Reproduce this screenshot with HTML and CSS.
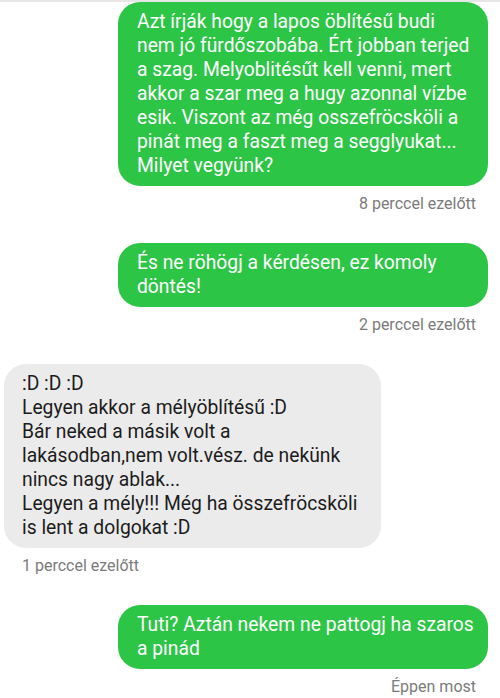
FILE: index.html
```html
<!DOCTYPE html>
<html lang="hu">
<head>
<meta charset="utf-8">
<link rel="stylesheet" href="styles.css">
</head>
<body>
<div class="topband"></div>
<div class="chat">
  <div class="msg out">
    <div class="bubble">Azt írják hogy a lapos öblítésű budi<br>nem jó fürdőszobába. Ért jobban terjed<br>a szag. Melyoblitésűt kell venni, mert<br>akkor a szar meg a hugy azonnal vízbe<br>esik. Viszont az még osszefröcsköli a<br>pinát meg a faszt meg a segglyukat...<br>Milyet vegyünk?</div>
    <div class="time">8 perccel ezelőtt</div>
  </div>
  <div class="msg out">
    <div class="bubble">És ne röhögj a kérdésen, ez komoly<br>döntés!</div>
    <div class="time">2 perccel ezelőtt</div>
  </div>
  <div class="msg in">
    <div class="bubble">:D :D :D<br>Legyen akkor a mélyöblítésű :D<br>Bár neked a másik volt a<br>lakásodban,nem volt.vész. de nekünk<br>nincs nagy ablak...<br>Legyen a mély!!! Még ha összefröcsköli<br>is lent a dolgokat :D</div>
    <div class="time">1 perccel ezelőtt</div>
  </div>
  <div class="msg out">
    <div class="bubble">Tuti? Aztán nekem ne pattogj ha szaros<br>a pinád</div>
    <div class="time">Éppen most</div>
  </div>
</div>
</body>
</html>
```
FILE: styles.css
```css
html, body {
  margin: 0;
  padding: 0;
  background: #ffffff;
}
body {
  width: 500px;
  height: 698px;
  overflow: hidden;
  font-family: Roboto, "Noto Sans", sans-serif;
}
.topband {
  height: 2px;
  background: #e6e6e6;
}
.chat {
  display: flex;
  flex-direction: column;
  gap: 29px;
}
.msg {
  display: flex;
  flex-direction: column;
}
.msg.out {
  align-items: flex-end;
  padding: 0 12px 0 118px;
}
.msg.in {
  align-items: flex-start;
  padding: 0 119px 0 4px;
}
.bubble {
  box-sizing: border-box;
  width: 100%;
  font-size: 19.3px;
  line-height: 24px;
  white-space: nowrap;
  border-radius: 22px;
}
.out .bubble {
  padding: 8px 12px 8px 19px;
  background: #2dc546;
  color: #ffffff;
}
.in .bubble {
  padding: 8px 20px 8px 18px;
  background: #ebebeb;
  color: #1c1c1c;
}
.time {
  font-size: 16px;
  line-height: 20px;
  color: #7b7b7b;
  margin-top: 8px;
}
.out .time {
  padding-right: 12px;
}
.in .time {
  padding-left: 18px;
}
```
